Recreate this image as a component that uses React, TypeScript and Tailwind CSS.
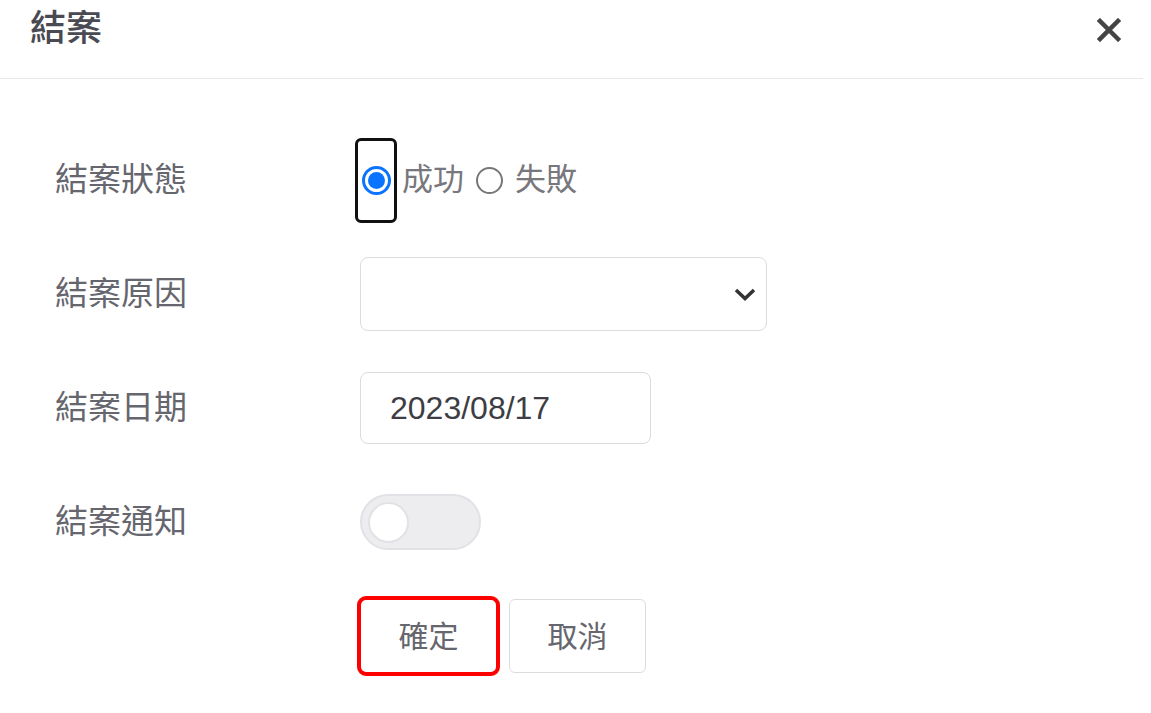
import { useState } from 'react';

const font = "font-['Liberation_Sans','Noto_Sans_CJK_TC',sans-serif]";

function Radio({ checked }: { checked: boolean }) {
  if (checked) {
    return (
      <span className="flex h-[29px] w-[29px] items-center justify-center rounded-full border-[3px] border-[#0a74ff] bg-white">
        <span className="block h-[17px] w-[17px] rounded-full bg-[#0a74ff]" />
      </span>
    );
  }
  return <span className="block h-[27px] w-[27px] rounded-full border-2 border-[#777]" />;
}

export default function App() {
  const [notify, setNotify] = useState(false);

  return (
    <div className={`${font} h-[713px] w-[1151px] bg-white`}>
      {/* header */}
      <div className="flex h-[79px] w-[1143px] items-center justify-between border-b border-[#e8e8ea] pl-[30px] pr-[22px]">
        <h1 className="pb-[20px] text-[36px] font-medium leading-none text-[#4a4a52]">結案</h1>
        <button className="mb-[18px] text-[#444]">
          <svg width="24" height="24" viewBox="0 0 24 24">
            <path d="M3 3L21 21M21 3L3 21" stroke="currentColor" strokeWidth="4.5" strokeLinecap="square" />
          </svg>
        </button>
      </div>

      <div className="flex flex-col pt-[44px] pl-[55px]">
        {/* status */}
        <div className="flex h-[114px] items-center">
          <div className="w-[305px] text-[33px] text-[#66666e]">結案狀態</div>
          <div className="-ml-[5px] flex items-center text-[31px] text-[#77777d]">
            <span className="flex h-[85px] w-[42px] items-center justify-center rounded-md border-[3px] border-[#111]">
              <Radio checked />
            </span>
            <span className="ml-[5px]">成功</span>
            <span className="ml-[12px] mr-[12px]"><Radio checked={false} /></span>
            <span>失敗</span>
          </div>
        </div>

        {/* reason */}
        <div className="flex h-[114px] items-center">
          <div className="w-[305px] text-[33px] text-[#66666e]">結案原因</div>
          <div className="flex h-[74px] w-[407px] items-center justify-end rounded-lg border border-[#dcdcdf] pr-[10px]">
            <svg width="22" height="14" viewBox="0 0 22 14">
              <path d="M2 3L11 11.5L20 3" fill="none" stroke="#333" strokeWidth="3.5" />
            </svg>
          </div>
        </div>

        {/* date */}
        <div className="flex h-[114px] items-center">
          <div className="w-[305px] text-[33px] text-[#66666e]">結案日期</div>
          <div className="flex h-[72px] w-[291px] items-center rounded-lg border border-[#dcdcdf] pl-[29px] text-[32px] text-[#3d3d44]">
            2023/08/17
          </div>
        </div>

        {/* notify */}
        <div className="flex h-[114px] items-center">
          <div className="w-[305px] text-[33px] text-[#66666e]">結案通知</div>
          <button
            onClick={() => setNotify(!notify)}
            className="flex h-[56px] w-[121px] items-center rounded-full border-2 border-[#e2e2e6] bg-[#ededf0] pl-[6px]"
          >
            <span className="h-[41px] w-[41px] rounded-full border-2 border-[#e2e2e6] bg-white" />
          </button>
        </div>

        {/* actions */}
        <div className="flex h-[114px] items-center pl-[305px]">
          <button className="h-[74px] w-[137px] rounded-md border border-[#dcdcdf] text-[30px] text-[#66666e] outline-4 outline-offset-[-1px] outline-[#ff0000]">
            確定
          </button>
          <button className="ml-[12px] h-[74px] w-[137px] rounded-md border border-[#dcdcdf] text-[30px] text-[#66666e]">
            取消
          </button>
        </div>
      </div>
    </div>
  );
}
